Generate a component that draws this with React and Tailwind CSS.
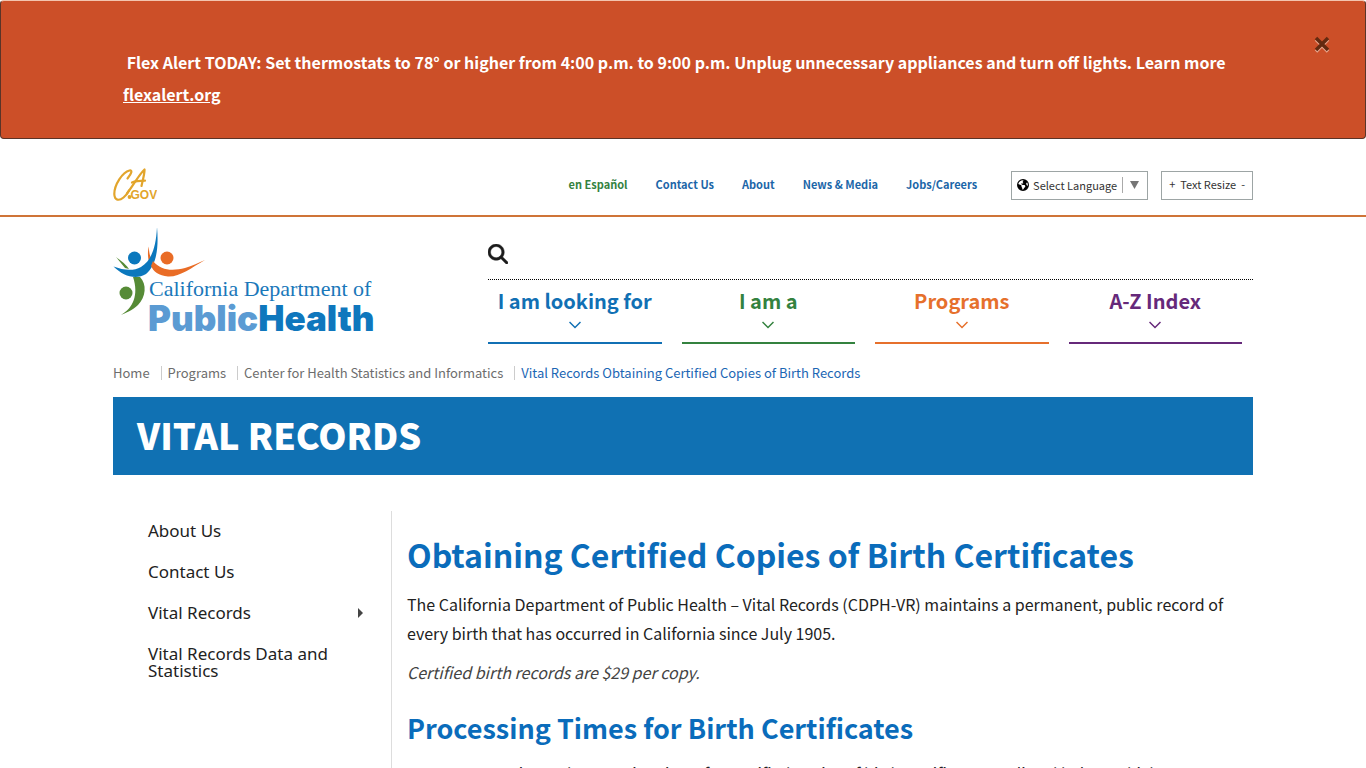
import { FaEarthAmericas, FaMagnifyingGlass } from "react-icons/fa6";

const topLinks = ["Contact Us", "About", "News & Media", "Jobs/Careers"];

const mainNav = [
  { label: "I am looking for", color: "border-[#1170b4] text-[#1170b4]" },
  { label: "I am a", color: "border-[#34823f] text-[#34823f]" },
  { label: "Programs", color: "border-[#e6702c] text-[#e6702c]" },
  { label: "A-Z Index", color: "border-[#66297a] text-[#66297a]" },
];

const crumbs = ["Home", "Programs", "Center for Health Statistics and Informatics"];

function AlertBanner() {
  return (
    <section className="rounded border border-[#5a3428] border-t-[#f3c4ae] bg-[#cc4f28] px-8 pt-[45px] pb-7 text-white">
      <div className="mx-auto w-full max-w-[1140px] pl-[10px]">
        <p className="text-[16px] leading-8 font-bold">
          &nbsp;Flex Alert TODAY: Set thermostats to 78° or higher from 4:00 p.m. to 9:00 p.m. Unplug unnecessary appliances and turn off lights. Learn more{" "}
          <a href="#flex" className="underline">flexalert.org</a>
        </p>
      </div>
      <button type="button" aria-label="Close" className="absolute top-8 right-9">
        <svg viewBox="0 0 16 24" className="h-6 w-4">
          <path d="M2 7.5 14 19.5M14 7.5 2 19.5" stroke="#e8a78f" strokeWidth="3.500" fill="none" />
          <path d="M2 6 14 18M14 6 2 18" stroke="#632a10" strokeWidth="3.500" fill="none" />
        </svg>
      </button>
    </section>
  );
}

function CaGovLogo() {
  return (
    <svg viewBox="0 0 44 34" className="h-[34px] w-11" role="img" aria-label="CA.gov">
      <g fill="none" stroke="#e2a52c" strokeLinecap="round" strokeLinejoin="round" strokeWidth="2.200">
        <path d="M14.5 10.5C19 5 19.500 1.800 16.500 2.500C9.500 4 1.300 17 1.300 26C1.500 32.500 6 33.200 10.500 29.500C13.500 27 15 24.500 16 22.500" />
        <path d="M14 25.500C20 18 26 6.500 31.500 1.500C31.800 5.500 29.500 13 28.500 18" />
        <path d="M19 14.500C23 12.800 27 12.700 32 12.700" />
      </g>
      <circle cx="16.500" cy="29" r="1.900" fill="#e2a52c" />
      <text x="17.500" y="31" fill="#e2a52c" fontSize="12" fontWeight="700" fontFamily="Liberation Sans, sans-serif">GOV</text>
    </svg>
  );
}

function DepartmentLogo() {
  return (
    <svg viewBox="0 0 270 116" className="h-[116px] w-[270px]" role="img" aria-label="California Department of Public Health">
      <path d="M35.500 32C34.500 26 35 22 35.800 18.500C36 24 37 28 38 30Z" fill="#e96c26" />
      <path d="M3 29C7 32.500 11 34 16 41L12 40C9 36 6 33 3 29Z" fill="#568b36" />
      <path d="M44 -1C46 21 43 38 33 46C23 52.500 10 48 .5 38.500C10 42 20 43.500 28 39C38 33 43 20 44 -1Z" fill="#0b78bd" />
      <path d="M40 33C48 43 60 43 72 40C79 38 86 34.500 92 32C78 40 67 49 55 48.500C46 48 40 43 38 38Z" fill="#e96c26" />
      <path d="M20 49H27C34 56 33 69 25 77C19 83 12 85 8 87C20 80 26 67 20 49Z" fill="#568b36" />
      <circle cx="21.500" cy="30" r="6.500" fill="#0b78bd" />
      <circle cx="54" cy="30" r="6.500" fill="#e96c26" />
      <circle cx="13" cy="65" r="6.500" fill="#568b36" />
      <text x="36" y="68" fill="#1a78ba" fontSize="22" fontFamily="Liberation Serif, serif">California Department of</text>
      <text x="35" y="103" fill="#5b9bd3" fontFamily="Inter, sans-serif" fontSize="35" fontWeight="900">
        Public<tspan fill="#0f77bd">Health</tspan>
      </text>
    </svg>
  );
}

function UtilityBar() {
  return (
    <div className="border-b-2 border-[#cf7438]">
      <div className="mx-auto flex h-[76px] max-w-[1140px] items-center justify-between">
        <a href="#ca" className="mt-4"><CaGovLogo /></a>
        <div className="mt-4 flex items-center">
          <nav className="mr-[34px] flex gap-7 pb-0.5 text-[11px] leading-5 font-bold text-[#1b66a8]">
            <a href="#es" className="text-[#34823f]">en Español</a>
            {topLinks.map((t) => <a key={t} href="#top">{t}</a>)}
          </nav>
          <button type="button" className="mr-[13px] flex h-[29px] items-center border border-[#9da5a5] pr-2 pl-[5px] text-[11px] text-[#333]">
            <FaEarthAmericas className="mr-1 size-3 text-black" />
            Select Language
            <span className="ml-[5px] flex h-4 items-center border-l border-[#aaa] pl-[7px]">
              <svg viewBox="0 0 9 8" className="h-2 w-[9px]"><path d="M0 0H9L4.500 8Z" fill="#767676" /></svg>
            </span>
          </button>
          <div className="flex h-[29px] items-center gap-[5px] border border-[#9da5a5] px-[7px] pb-0.5 text-[11px] text-[#333]">
            <button type="button" aria-label="Increase text size">+</button>
            <span>Text Resize</span>
            <button type="button" aria-label="Decrease text size">-</button>
          </div>
        </div>
      </div>
    </div>
  );
}

function Header() {
  return (
    <header className="mx-auto flex max-w-[1140px] items-start justify-between">
      <a href="#home" className="mt-[11px]"><DepartmentLogo /></a>
      <div className="w-[765px]">
        <button type="button" aria-label="Search" className="mt-[27px] block text-[#1c1c1c]">
          <FaMagnifyingGlass className="size-5" stroke="currentColor" strokeWidth="12" />
        </button>
        <div className="mt-[15px] border-t border-dotted border-black" />
        <nav className="grid grid-cols-4 gap-5 pr-[11px]">
          {mainNav.map((n) => (
            <a key={n.label} href="#nav" className={"flex h-16 flex-col items-center border-b-2 pt-[7px] text-[20px] leading-7 font-bold " + n.color}>
              {n.label}
              <svg viewBox="0 0 12 8" className="mt-[6px] h-2 w-3" fill="none" stroke="currentColor" strokeWidth="1.5"><path d="M.5 1 6 6.500 11.500 1" /></svg>
            </a>
          ))}
        </nav>
      </div>
    </header>
  );
}

function Sidebar() {
  return (
    <nav className="w-[279px] shrink-0 border-r border-[#ddd] pt-[11px] pr-7 pl-[35px] font-['Noto_Sans','Open_Sans',sans-serif] text-[17px] leading-[17px] text-[#222]">
      <ul className="flex flex-col gap-6">
        <li><a href="#about">About Us</a></li>
        <li><a href="#contact">Contact Us</a></li>
        <li>
          <a href="#vital" className="flex items-center justify-between">
            Vital Records
            <svg viewBox="0 0 5 10" className="h-[10px] w-[5px]"><path d="M0 0 5 5 0 10Z" fill="#444" /></svg>
          </a>
        </li>
        <li><a href="#data">Vital Records Data and Statistics</a></li>
      </ul>
    </nav>
  );
}

export default function App() {
  return (
    <div className="relative h-screen overflow-hidden bg-white font-['Noto_Sans_CJK_SC','Open_Sans',sans-serif]">
      <AlertBanner />
      <UtilityBar />
      <Header />
      <main className="mx-auto max-w-[1140px]">
        <nav aria-label="Breadcrumb" className="mt-[19px] text-[13px] leading-5 text-[#6d6d6d]">
          <ol className="flex">
            {crumbs.map((c) => (
              <li key={c} className="flex items-center">
                <a href="#crumb">{c}</a>
                <span className="mr-[6px] ml-[11px] h-[14px] border-l border-[#ccc]" />
              </li>
            ))}
            <li className="text-[#1b66b4]">Vital Records Obtaining Certified Copies of Birth Records</li>
          </ol>
        </nav>
        <div className="mt-[14px] bg-[#1071b3] px-6 pt-[13px] pb-[17px] text-[36px] leading-12 font-black text-white">VITAL RECORDS</div>
        <div className="mt-9 flex">
          <Sidebar />
          <article className="min-w-0 flex-1 pt-[22px] pl-[15px] text-[16px] leading-[29px] text-[#222]">
            <h1 className="text-[32px] leading-[42px] font-bold text-[#0a6cbb]">Obtaining Certified Copies of Birth Certificates</h1>
            <p className="mt-[15px]">The California Department of Public Health – Vital Records (CDPH-VR) maintains a permanent, public record of every birth that has occurred in California since July 1905.</p>
            <p className="mt-[10px] italic text-[#444]">Certified birth records are $29 per copy.</p>
            <h2 className="mt-6 text-[27px] leading-[34px] font-bold text-[#0a6cbb]">Processing Times for Birth Certificates</h2>
            <p className="mt-[14px]">Our current estimated processing times for certified copies of birth certificates are listed below, which</p>
          </article>
        </div>
      </main>
    </div>
  );
}
